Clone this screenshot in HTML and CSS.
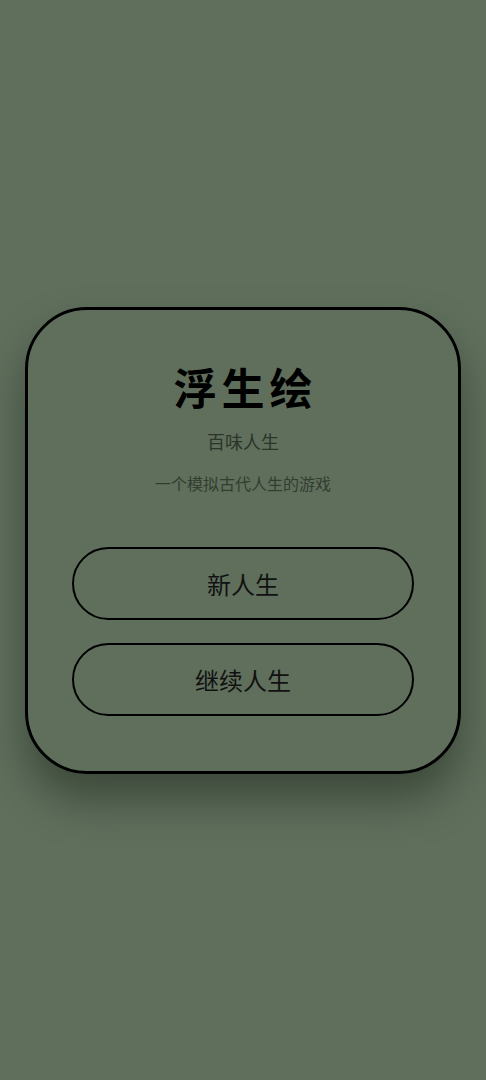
FILE: index.html
```html
<!DOCTYPE html>
<html lang="zh-CN">

<head>
    <meta charset="UTF-8">
    <meta name="viewport" content="width=device-width, initial-scale=1.0">
    <title>浮生绘</title>
    <link rel="stylesheet" href="styles.css">
</head>

<body>
    <div class="start">
        <h1 class="title">浮生绘</h1>
        <p class="subtitle">百味人生</p>
        <p class="desc">一个模拟古代人生的游戏</p>
        <div class="menu">
            <button class="btn">新人生</button>
            <button class="btn">继续人生</button>
        </div>
    </div>
</body>

</html>
```

FILE: styles.css
```css
* {
    box-sizing: border-box;
    padding: 0;
    margin: 0;
}

body {
    min-height: 100vh;
    display: flex;
    justify-content: center;
    align-items: center;
    background-color: #5f6f5c;
    font-family: "Noto Sans CJK SC", "Noto Sans", sans-serif;
    color: #111;
}

.start {
    width: 436px;
    padding: 48px 44px 55px;
    border: 3px solid #000;
    border-radius: 62px;
    background-color: #5f6f5c;
    box-shadow: 0 26px 40px rgba(40, 50, 38, 0.6);
    text-align: center;
}

.title {
    font-size: 43px;
    line-height: 56px;
    font-weight: bold;
    letter-spacing: 5px;
    padding-left: 5px;
    color: #000;
}

.subtitle {
    margin-top: 14px;
    font-size: 18px;
    line-height: 26px;
    color: #2b3529;
}

.desc {
    margin-top: 17px;
    font-size: 16px;
    line-height: 24px;
    color: #323d30;
}

.menu {
    display: flex;
    flex-direction: column;
    gap: 23px;
    margin-top: 52px;
}

.btn {
    height: 73px;
    border: 2.5px solid #000;
    border-radius: 40px;
    background-color: transparent;
    font-family: inherit;
    font-size: 24px;
    color: #111;
    cursor: pointer;
}
```
